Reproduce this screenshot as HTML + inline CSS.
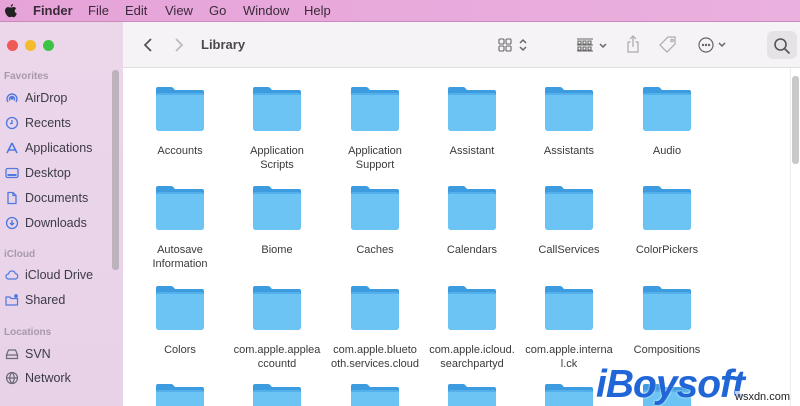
<!DOCTYPE html>
<html><head><meta charset="utf-8"><style>
*{margin:0;padding:0;box-sizing:border-box}
html,body{width:800px;height:406px;overflow:hidden}
body{position:relative;font-family:"Liberation Sans",sans-serif;background:#fff}
.menu{position:absolute;left:0;top:0;width:800px;height:22px;background:linear-gradient(90deg,#e6a3d8,#eab0de);border-bottom:1px solid #c98bbd;font-size:13px;color:#3a2a3a}
.menu span{position:absolute;top:3px}
.side{position:absolute;left:0;top:22px;width:123px;height:384px;background:linear-gradient(180deg,#ecd6ea,#e7d2e8)}
.sb{position:absolute;left:112px;top:48px;width:7px;height:200px;background:#bdb3bd;border-radius:3px}
.side .h{position:absolute;left:4px;font-size:10px;color:#a89aa8;font-weight:bold}
.side .i{position:absolute;left:25px;font-size:12.5px;color:#3c3a45}
.side svg{position:absolute;left:5px}
.tb{position:absolute;left:123px;top:22px;width:677px;height:46px;background:#f6f3f6;border-bottom:1px solid #e2dfe2}
.cont{position:absolute;left:123px;top:68px;width:677px;height:338px;background:#fff;overflow:hidden}
.f{position:absolute;width:52px;height:46px}
.l{position:absolute;width:96px;text-align:center;font-size:11px;color:#3a3a3a;line-height:14px}
</style></head><body>
<div class="menu">
<svg style="position:absolute;left:5px;top:4px" width="12" height="14" viewBox="0 0 12 14"><path d="M8 0c0 1.5-1 2.6-2.3 2.7C5.6 1.3 6.7.2 8 0zM6 3.6c.8 0 1.7-.6 2.6-.6 1 0 2 .5 2.6 1.4-2.2 1.2-1.8 4.3.6 5.1-.5 1.5-1.7 3.7-2.9 3.7-.8 0-1.2-.5-2.2-.5-1.1 0-1.4.5-2.2.5C3.1 13.2 0 9.9 0 6.8 0 4.4 1.6 3.1 3.2 3.1 4.2 3.1 5.2 3.600 6 3.600z" fill="#222"/></svg>
<span style="left:33px;font-weight:bold">Finder</span>
<span style="left:88px">File</span><span style="left:125px">Edit</span><span style="left:165px">View</span><span style="left:209px">Go</span><span style="left:243px">Window</span><span style="left:304px">Help</span>
</div>
<div class="side">
<div style="position:absolute;left:7px;top:18px;width:11px;height:11px;border-radius:50%;background:#ee5a55"></div>
<div style="position:absolute;left:25px;top:18px;width:11px;height:11px;border-radius:50%;background:#f4bb2d"></div>
<div style="position:absolute;left:43px;top:18px;width:11px;height:11px;border-radius:50%;background:#3cc444"></div>
<div class="sb"></div>
<div class="h" style="top:49px">Favorites</div>
<svg style="top:69px" width="14" height="14" viewBox="0 0 14 14" fill="none" stroke="#4f79e0" stroke-width="1.4"><path d="M3 11A5 5 0 1 1 11 11M5 9.5A2.5 2.5 0 1 1 9 9.5"/><circle cx="7" cy="7" r="1" fill="#4f79e0"/></svg><div class="i" style="top:69px">AirDrop</div>
<svg style="top:94px" width="14" height="14" viewBox="0 0 14 14" fill="none" stroke="#4f79e0" stroke-width="1.3"><circle cx="7" cy="7" r="5.5"/><path d="M7 4v3.5H5"/></svg><div class="i" style="top:94px">Recents</div>
<svg style="top:119px" width="14" height="14" viewBox="0 0 14 14" fill="none" stroke="#4f79e0" stroke-width="1.6"><path d="M7 2L2 12M7 2l5 10M3.5 9h7"/></svg><div class="i" style="top:119px">Applications</div>
<svg style="top:144px" width="14" height="14" viewBox="0 0 14 14" fill="none" stroke="#4f79e0" stroke-width="1.3"><rect x="1" y="2.5" width="12" height="9" rx="1.5"/><path d="M2.5 9h9" stroke-width="2"/></svg><div class="i" style="top:144px">Desktop</div>
<svg style="top:169px" width="14" height="14" viewBox="0 0 14 14" fill="none" stroke="#4f79e0" stroke-width="1.3"><path d="M3 1.5h5l3 3v8H3zM8 1.5v3h3"/></svg><div class="i" style="top:169px">Documents</div>
<svg style="top:194px" width="14" height="14" viewBox="0 0 14 14" fill="none" stroke="#4f79e0" stroke-width="1.3"><circle cx="7" cy="7" r="5.5"/><path d="M7 4v5M5 7l2 2 2-2"/></svg><div class="i" style="top:194px">Downloads</div>
<div class="h" style="top:227px">iCloud</div>
<svg style="top:246px" width="14" height="14" viewBox="0 0 14 14" fill="none" stroke="#4f79e0" stroke-width="1.2"><path d="M3.5 11a2.5 2.5 0 0 1 0-5 3.5 3.5 0 0 1 6.8-.5A2.8 2.8 0 0 1 10.5 11z"/></svg><div class="i" style="top:246px">iCloud Drive</div>
<svg style="top:271px" width="14" height="14" viewBox="0 0 14 14" fill="none" stroke="#4f79e0" stroke-width="1.2"><path d="M1 4h4l1 1.5h6.5V12H1z"/><circle cx="11" cy="3" r="1.3" fill="#4f79e0"/></svg><div class="i" style="top:271px">Shared</div>
<div class="h" style="top:305px">Locations</div>
<svg style="top:325px" width="14" height="14" viewBox="0 0 14 14" fill="none" stroke="#6a6a78" stroke-width="1.2"><path d="M1.5 8l2-5h7l2 5v3.5h-11z M1.5 8h11"/></svg><div class="i" style="top:325px">SVN</div>
<svg style="top:349px" width="14" height="14" viewBox="0 0 14 14" fill="none" stroke="#6a6a78" stroke-width="1.2"><circle cx="7" cy="7" r="5.5"/><path d="M1.5 7h11M7 1.5c-3 3-3 8 0 11M7 1.5c3 3 3 8 0 11"/></svg><div class="i" style="top:349px">Network</div>
</div>
<div class="tb">
<svg style="position:absolute;left:19px;top:15px" width="12" height="16" viewBox="0 0 12 16" fill="none" stroke="#555" stroke-width="1.8"><path d="M9 2L3 8l6 6"/></svg>
<svg style="position:absolute;left:50px;top:15px" width="12" height="16" viewBox="0 0 12 16" fill="none" stroke="#bbb" stroke-width="1.8"><path d="M3 2l6 6-6 6"/></svg>
<div style="position:absolute;left:78px;top:15px;font-size:13px;font-weight:bold;color:#4a4a4a">Library</div>
<svg style="position:absolute;left:375px;top:15px" width="34" height="16" viewBox="0 0 34 16" fill="none" stroke="#666" stroke-width="1.1"><rect x="1" y="2" width="5" height="5" rx="1"/><rect x="8" y="2" width="5" height="5" rx="1"/><rect x="1" y="9" width="5" height="5" rx="1"/><rect x="8" y="9" width="5" height="5" rx="1"/><path d="M22 6l3-3 3 3M22 10l3 3 3-3" stroke-width="1.5"/></svg>
<svg style="position:absolute;left:453px;top:15px" width="34" height="16" viewBox="0 0 34 16" fill="none" stroke="#666" stroke-width="1.1"><path d="M1 2h16M1 8h16M1 14h16M2 4h3v3H2zM7 4h3v3H7zM12 4h3v3h-3zM2 10h3v3H2zM7 10h3v3H7zM12 10h3v3h-3z"/><path d="M24 7l3 3 3-3" stroke-width="1.5"/></svg>
<svg style="position:absolute;left:503px;top:12px" width="14" height="20" viewBox="0 0 14 20" fill="none" stroke="#aaa" stroke-width="1.2"><path d="M4.5 8H2v10h10V8H9.5M7 13V2M4 5l3-3 3 3"/></svg>
<svg style="position:absolute;left:535px;top:13px" width="20" height="20" viewBox="0 0 20 20" fill="none" stroke="#aaa" stroke-width="1.2"><path d="M10 2h7v7l-8 8-7-7z"/><circle cx="14" cy="5.5" r="1.2"/></svg>
<svg style="position:absolute;left:575px;top:14px" width="32" height="18" viewBox="0 0 32 18" fill="none" stroke="#666" stroke-width="1.2"><circle cx="8" cy="9" r="7"/><circle cx="5" cy="9" r=".6" fill="#666"/><circle cx="8" cy="9" r=".6" fill="#666"/><circle cx="11" cy="9" r=".6" fill="#666"/><path d="M21 7l3 3 3-3" stroke-width="1.5"/></svg>
<div style="position:absolute;left:644px;top:9px;width:30px;height:28px;border-radius:6px;background:#e6e3e6"></div>
<svg style="position:absolute;left:650px;top:15px" width="18" height="18" viewBox="0 0 18 18" fill="none" stroke="#555" stroke-width="1.6"><circle cx="7.5" cy="7.5" r="5.5"/><path d="M11.5 11.5l5 5"/></svg>
</div>
<div class="cont">
<div style="position:absolute;left:669px;top:8px;width:7px;height:88px;border-radius:3px;background:#c9c9c9"></div>
<div style="position:absolute;left:667px;top:0;width:1px;height:338px;background:#ececec"></div>
</div>
<svg width="0" height="0" style="position:absolute"><defs><symbol id="fo" viewBox="0 0 52 46"><path d="M2 3a2 2 0 0 1 2-2h13c2 0 3 2 4 3h27a2 2 0 0 1 2 2v36a3 3 0 0 1-3 3H5a3 3 0 0 1-3-3z" fill="#3d9be0"/><path d="M2 9a2 2 0 0 1 2-2h44a2 2 0 0 1 2 2v33a3 3 0 0 1-3 3H5a3 3 0 0 1-3-3z" fill="#6cc4f4"/><path d="M2 8h48" stroke="#3d9be0" stroke-width="1"/></symbol></defs></svg>
<div id="g" style="position:absolute;left:0;top:0;width:800px;height:406px;overflow:hidden"></div>
<div style="position:absolute;left:596px;top:366px;font-family:'Liberation Sans',sans-serif;font-weight:bold;font-style:italic;font-size:39px;color:#2166d6;letter-spacing:-1px;line-height:38px;height:38px;text-shadow:0 0 2px #fff">iBoysoft</div>
<div style="position:absolute;left:735px;top:391px;font-size:11px;line-height:13px;color:#222;background:rgba(255,255,255,.7)">wsxdn.com</div>
<script>
var xs=[154,251,349,446,543,641],ys=[86,185,285,383];
var L=[["Accounts","Application<br>Scripts","Application<br>Support","Assistant","Assistants","Audio"],["Autosave<br>Information","Biome","Caches","Calendars","CallServices","ColorPickers"],["Colors","com.apple.applea<br>ccountd","com.apple.blueto<br>oth.services.cloud","com.apple.icloud.<br>searchpartyd","com.apple.interna<br>l.ck","Compositions"]];
var h="";
for(var r=0;r<4;r++)for(var c=0;c<6;c++){
var hh=r==3?23:46;
h+='<svg class="f" style="left:'+xs[c]+'px;top:'+ys[r]+'px;height:'+hh+'px"><use href="#fo" width="52" height="46"/></svg>';
if(r<3)h+='<div class="l" style="left:'+(xs[c]-22)+'px;top:'+(ys[r]+58)+'px">'+L[r][c]+'</div>';}
document.getElementById("g").innerHTML=h;
</script>
</body></html>
